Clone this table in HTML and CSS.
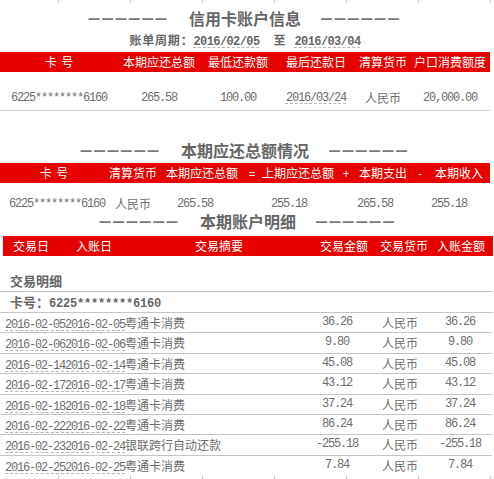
FILE: index.html
```html
<!DOCTYPE html>
<html lang="zh-CN">
<head>
<meta charset="utf-8">
<title>信用卡账单</title>
<link rel="stylesheet" href="styles.css">
</head>
<body>
<div class="page">
  <div class="ruler top"><span></span><span></span><span></span><span></span><span></span><span></span><span></span></div>

  <h2 class="title t1"><span class="dash">——————</span><span>信用卡账户信息</span><span class="dash">——————</span></h2>
  <p class="period"><span class="lbl">账单周期：</span><span class="num u">2016/02/05</span><span class="to">至</span><span class="num u">2016/03/04</span></p>
  <div class="bar g1">
    <span class="sp">卡 号</span><span>本期应还总额</span><span>最低还款额</span><span>最后还款日</span><span>清算货币</span><span>户口消费额度</span>
  </div>
  <div class="data1 g1">
    <span class="num">6225********6160</span><span class="num">265.58</span><span class="num">100.00</span><span class="num"><span class="u">2016/03/24</span></span><span>人民币</span><span class="num">20,000.00</span>
  </div>

  <h2 class="title t2"><span class="dash">——————</span><span>本期应还总额情况</span><span class="dash">——————</span></h2>
  <div class="bar g2">
    <span class="sp">卡 号</span><span>清算货币</span><span>本期应还总额</span><span>=</span><span>上期应还总额</span><span>+</span><span>本期支出</span><span>-</span><span>本期收入</span>
  </div>
  <div class="data2">
    <span class="num">6225********6160</span><span>人民币</span><span class="num">265.58</span><span class="num">255.18</span><span class="num">265.58</span><span class="num">255.18</span>
  </div>

  <h2 class="title t3"><span class="dash">——————</span><span>本期账户明细</span><span class="dash">——————</span></h2>
  <div class="bar g3">
    <span>交易日</span><span>入账日</span><span>交易摘要</span><span>交易金额</span><span>交易货币</span><span>入账金额</span>
  </div>

  <div class="detail-head">交易明细</div>
  <div class="card-line">卡号：<span class="num">6225********6160</span></div>

  <div class="rows">
    <div class="row"><span><span class="num u">2016-02-052016-02-05</span>粤通卡消费</span><span class="num">36.26</span><span>人民币</span><span class="num">36.26</span></div>
    <div class="row"><span><span class="num u">2016-02-062016-02-06</span>粤通卡消费</span><span class="num">9.80</span><span>人民币</span><span class="num">9.80</span></div>
    <div class="row"><span><span class="num u">2016-02-142016-02-14</span>粤通卡消费</span><span class="num">45.08</span><span>人民币</span><span class="num">45.08</span></div>
    <div class="row"><span><span class="num u">2016-02-172016-02-17</span>粤通卡消费</span><span class="num">43.12</span><span>人民币</span><span class="num">43.12</span></div>
    <div class="row"><span><span class="num u">2016-02-182016-02-18</span>粤通卡消费</span><span class="num">37.24</span><span>人民币</span><span class="num">37.24</span></div>
    <div class="row"><span><span class="num u">2016-02-222016-02-22</span>粤通卡消费</span><span class="num">86.24</span><span>人民币</span><span class="num">86.24</span></div>
    <div class="row"><span><span class="num u">2016-02-232016-02-24</span>银联跨行自动还款</span><span class="num">-255.18</span><span>人民币</span><span class="num">-255.18</span></div>
    <div class="row"><span><span class="num u">2016-02-252016-02-25</span>粤通卡消费</span><span class="num">7.84</span><span>人民币</span><span class="num">7.84</span></div>
  </div>

  <div class="ruler bottom"><span></span><span></span><span></span><span></span><span></span><span></span><span></span></div>
</div>
</body>
</html>
```

FILE: styles.css
```css
* { box-sizing: border-box; }

body {
  margin: 0;
  background: #fff;
  font-family: "Noto Sans CJK SC", "Liberation Sans", sans-serif;
  font-size: 12px;
  color: #6e6e6e;
}

.page { width: 494px; }

.num {
  font-family: "Liberation Mono", "Noto Sans CJK SC", monospace;
  letter-spacing: -1.2px;
}

.u {
  text-decoration: underline dashed #b5b5b5;
  text-underline-offset: 2px;
  text-decoration-thickness: 1px;
}

.sp { word-spacing: 2px; }

/* tick rulers */
.ruler {
  display: grid;
  grid-template-columns: 59px repeat(6, 72px);
  width: 494px;
}
.ruler span { border-right: 1px solid #c8c8c8; }
.ruler.top { height: 3px; }
.ruler.bottom {
  height: 5px;
  align-items: end;
  border-bottom: 1px solid #c8c8c8;
}
.ruler.bottom span { height: 3px; }

/* section titles */
.title {
  display: flex;
  justify-content: center;
  align-items: center;
  gap: 20px;
  margin: 0;
  width: 490px;
  font-size: 16px;
  font-weight: bold;
  line-height: 20px;
  color: #666;
}
.dash {
  display: inline-block;
  font-family: "Liberation Sans", sans-serif;
  font-size: 11px;
  letter-spacing: 2.4px;
  color: #7a7a7a;
  transform: scaleY(1.6);
}
.t1 { padding: 5px 0 2px; }
.t2 { padding: 29px 0 3px; }
.t3 { padding: 0 0 6px 6px; line-height: 18px; }

.period {
  margin: 0;
  width: 490px;
  text-align: center;
  font-weight: bold;
  line-height: 19px;
  color: #666;
}
.period .lbl { letter-spacing: 0.8px; }
.period .num { letter-spacing: -0.6px; }
.period .to { margin: 0 9px 0 14px; }

/* red header bars */
.bar {
  display: grid;
  width: 490px;
  height: 20px;
  line-height: 20px;
  background: #e60000;
  color: #fff;
}
.bar span, .data1 span, .data2 span { text-align: center; white-space: nowrap; }

.g1 { grid-template-columns: 118px 82px 76px 80px 54px 80px; }
.g2 { grid-template-columns: 108px 50px 88px 12px 80px 16px 58px 16px 62px; }
.g3 { grid-template-columns: 56px 70px 180px 70px 50px 64px; margin-left: 3px; }

.data1 {
  display: grid;
  width: 490px;
  padding: 19px 0 5px;
  line-height: 14px;
  border-bottom: 1px solid #cfcfcf;
}

.data2 {
  display: grid;
  grid-template-columns: 114px 38px 86px 102px 70px 78px;
  width: 490px;
  padding: 14px 0 1px;
  line-height: 14px;
}

/* detail list */
.detail-head {
  width: 493px;
  padding: 17px 0 2px 10px;
  line-height: 16px;
  font-size: 13px;
  font-weight: bold;
  color: #666;
  border-bottom: 1px solid #c4c4c4;
}
.card-line {
  width: 493px;
  padding-left: 10px;
  height: 21px;
  line-height: 20px;
  font-size: 13px;
  font-weight: bold;
  color: #666;
  border-bottom: 1px solid #c4c4c4;
}
.card-line .num { font-size: 12px; letter-spacing: -0.2px; }

.row {
  display: grid;
  grid-template-columns: 306px 62px 64px 56px;
  width: 492px;
  height: 20.4px;
  line-height: 19.4px;
  border-bottom: 1px solid #c4c4c4;
  white-space: nowrap;
}
.row:last-child { border-bottom: none; height: 19.4px; }
.row > span:first-child { padding-left: 5px; }
.row > span:nth-child(n+2) { text-align: center; }
```
